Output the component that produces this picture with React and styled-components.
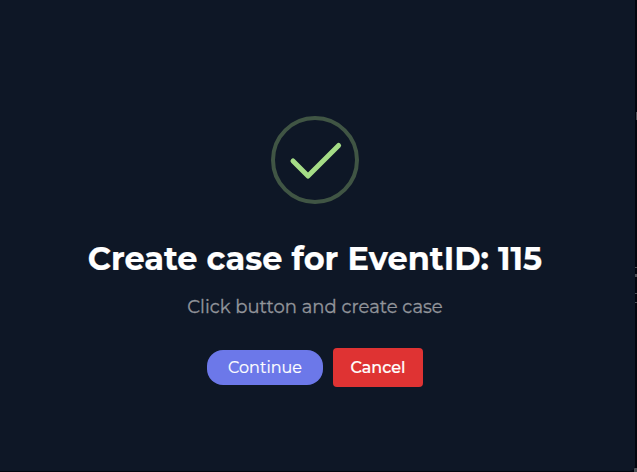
import React from "react";
import styled, { createGlobalStyle } from "styled-components";

const GlobalStyle = createGlobalStyle`
  *, *::before, *::after { box-sizing: border-box; }
  body { margin: 0; background: #03060f; font-family: Montserrat, Inter, sans-serif; }
`;

const Page = styled.div`
  position: relative;
  width: 637px;
  height: 472px;
  padding: 0 2px 1px 0;
  overflow: hidden;
  background: #03060f;
`;

const Dialog = styled.main`
  position: relative;
  width: 100%;
  height: 100%;
  padding: 116px 5px 0 0;
  display: flex;
  flex-direction: column;
  align-items: center;
  background: #0e1726;
  border-bottom-right-radius: 5px;
`;

/* Slivers of the page content behind the dialog, showing past its edge. */
const BackdropMark = styled.span`
  position: absolute;
  right: 0;
  top: ${({ $top }) => $top}px;
  width: ${({ $width = 1 }) => $width}px;
  height: ${({ $height }) => $height}px;
  background: #4b4e55;
`;

const SuccessIcon = styled.svg`
  flex: none;
  width: 88px;
  height: 88px;
`;

const Title = styled.h2`
  margin: 35px 0 0;
  height: 40px;
  font-size: 32px;
  line-height: 40px;
  font-weight: 700;
  white-space: nowrap;
  color: #fff;
  -webkit-text-stroke: 0.2px #fff;
`;

const Message = styled.p`
  margin: 16px 0 0;
  height: 24px;
  font-size: 18px;
  line-height: 24px;
  white-space: nowrap;
  color: #92959b;
  -webkit-text-stroke: 0.3px #92959b;
`;

const Actions = styled.div`
  margin-top: 29px;
  display: flex;
  align-items: center;
  gap: 10px;
`;

const Button = styled.button`
  padding: 0;
  border: 0;
  font-family: inherit;
  font-size: 16px;
  line-height: 20px;
  color: #fff;
  -webkit-text-stroke: 0.2px #fff;
`;

const ContinueButton = styled(Button)`
  width: 116px;
  height: 35px;
  border-radius: 16px;
  background: #6c78e9;
  font-weight: 400;
`;

const CancelButton = styled(Button)`
  width: 90px;
  height: 39px;
  border-radius: 4px;
  background: #df3333;
  font-weight: 500;
`;

const backdropMarks = [
  { top: 112, height: 8 },
  { top: 267, height: 1, width: 2 },
  { top: 274, height: 3, width: 2 },
  { top: 293, height: 1, width: 2 },
  { top: 302, height: 1, width: 2 },
  { top: 468, height: 4, width: 3 },
];

export default function App() {
  return (
    <>
      <GlobalStyle />
      <Page>
        {backdropMarks.map((mark) => (
          <BackdropMark key={mark.top} $top={mark.top} $height={mark.height} $width={mark.width} />
        ))}
        <Dialog>
          <SuccessIcon viewBox="0 0 88 88" fill="none" aria-hidden="true">
            <circle cx="44" cy="44" r="42" stroke="#405544" strokeWidth="4" />
            <path d="M22 45 L37 60 L67.6 29.4" stroke="#a5dc86" strokeWidth="5" strokeLinecap="round" strokeLinejoin="round" />
          </SuccessIcon>
          <Title>Create case for EventID: 115</Title>
          <Message>Click button and create case</Message>
          <Actions>
            <ContinueButton>Continue</ContinueButton>
            <CancelButton>Cancel</CancelButton>
          </Actions>
        </Dialog>
      </Page>
    </>
  );
}
